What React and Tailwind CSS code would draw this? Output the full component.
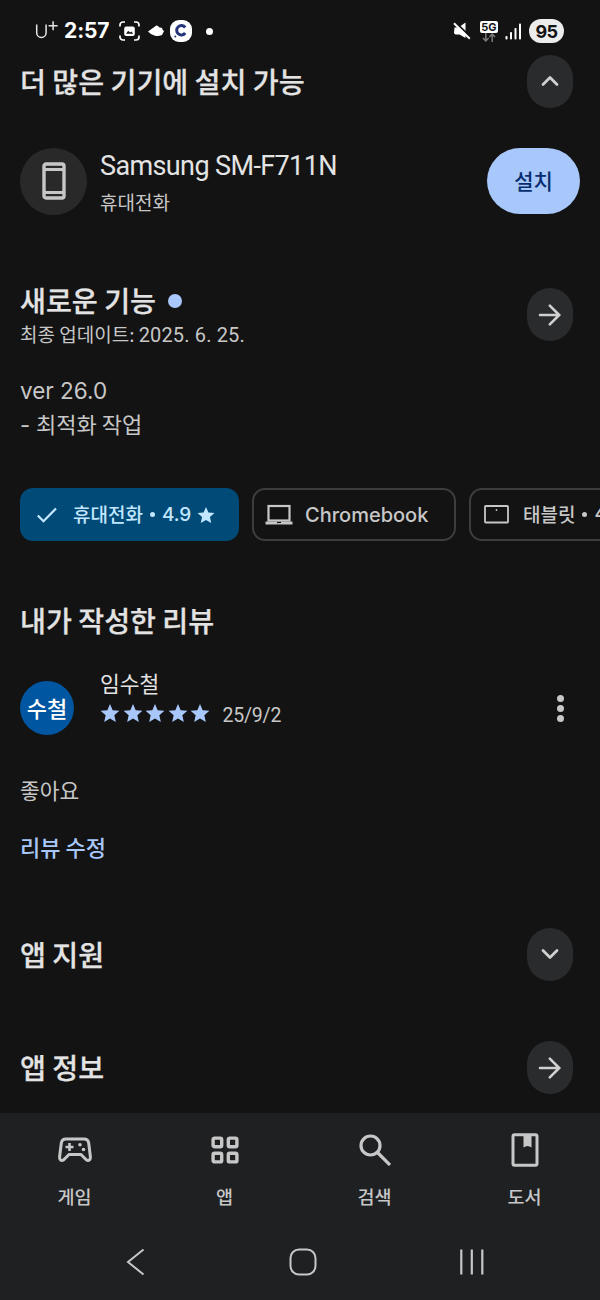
import { ChevronUp, ChevronDown } from 'lucide-react'

const STAR = 'M12 1.2l3.2 7.500 8.100.700-6.100 5.400 1.800 7.900L12 18.500l-7 4.200 1.800-7.900L.7 9.400l8.100-.7z'

function Star({ className }) {
  return (
    <svg viewBox="0 0 24 24" className={className} fill="currentColor">
      <path d={STAR} />
    </svg>
  )
}

function ArrowIcon() {
  return (
    <svg width="24" height="24" viewBox="0 0 24 24" fill="none" stroke="currentColor" strokeWidth="2.6" strokeLinecap="round">
      <path d="M2 12h19M11.800 2.700l9.400 9.300-9.400 9.300" />
    </svg>
  )
}

function RoundButton({ children }) {
  return (
    <button className="flex h-[53px] w-[46px] shrink-0 items-center justify-center rounded-full bg-[#2a2b2d] text-[#d0d0d0]">
      {children}
    </button>
  )
}

function Heading({ children }) {
  return (
    <h2 className="-mt-[2px] text-[28.200px] leading-9 font-medium whitespace-nowrap text-[#e3e3e3] [-webkit-text-stroke:0.25px]">
      {children}
    </h2>
  )
}

function StatusBar() {
  return (
    <div className="flex h-[55px] items-center pt-[7px] pr-[36px] pl-[35px] font-['Inter',sans-serif] text-white">
      <svg width="24" height="22" viewBox="0 0 24 22" fill="none" stroke="#e8e8e8" strokeWidth="1.5">
        <path d="M1.700 4.500v8.200a4.700 4.700 0 0 0 9.400 0V4.500M13.600 5.800h9M18.100 1.300v9" />
      </svg>
      <span className="ml-[5px] w-[46px] text-[21px] leading-6 font-bold tracking-[-0.100px] whitespace-nowrap">2:57</span>
      <svg className="ml-[9px]" width="21" height="20" viewBox="0 0 21 20" fill="none" stroke="white" strokeWidth="1.7">
        <path d="M1 5.500V4a3 3 0 0 1 3-3h2M15 1h2a3 3 0 0 1 3 3v1.500M20 14.500V16a3 3 0 0 1-3 3h-2M6 19H4a3 3 0 0 1-3-3v-1.500" />
        <rect x="5.200" y="5.500" width="10.600" height="9.500" rx="2" fill="white" stroke="none" />
        <path d="M7 12.800l2.200-3 1.800 1.800 1.500-1.200 1.700 2.400z" fill="#131313" stroke="none" />
      </svg>
      <svg className="ml-[7px]" width="18" height="14" viewBox="0 0 18 14" fill="white">
        <path d="M1 7.500L8 2.500q1.500-1.800 3-.5l1.500 1.500 2 .2q1 .4.800 1.600l1.700 2-2 3.700q-3.500 1.500-7 .800-4-.7-7-4.300z" />
      </svg>
      <span className="ml-[5px] flex h-[22px] w-[22px] items-center justify-center rounded-[9px] bg-white">
        <svg width="18" height="18" viewBox="0 0 18 18" fill="none" stroke="#26357b" strokeWidth="3">
          <path d="M13.200 5.500A4.700 4.700 0 1 0 13.200 11" />
          <circle cx="3.300" cy="14.500" r="1" fill="#26357b" stroke="none" />
        </svg>
      </span>
      <span className="ml-[14px] h-[7px] w-[7px] rounded-full bg-white" />

      <svg className="ml-auto" width="18" height="18" viewBox="0 0 18 18" fill="white">
        <path d="M1.500 5.500h4l7-5V16L6.500 12.500H3a2 2 0 0 1-2-2z" />
        <path d="M2 0l16 15.500" stroke="#131313" strokeWidth="2" />
        <path d="M1 1.200l15.800 15.500" stroke="white" strokeWidth="1.900" />
      </svg>
      <span className="ml-[9px] flex w-[18px] flex-col items-center">
        <span className="h-[12px] w-[18px] rounded-[2px] bg-white text-center text-[11px] leading-[12px] font-bold text-[#131313]">5G</span>
        <svg width="14" height="9" viewBox="0 0 14 9" fill="none" stroke="#77797a" strokeWidth="1.500">
          <path d="M3.800 0v8M1 5l2.800 3 2.800-3M10.200 9V1M7.400 4l2.800-3L13 4" />
        </svg>
      </span>
      <svg className="ml-[7px]" width="17" height="17" viewBox="0 0 17 17" fill="white">
        <rect x="0.500" y="13" width="2" height="3.500" rx=".8" />
        <rect x="5" y="9" width="2" height="7.500" rx=".8" />
        <rect x="9.500" y="5" width="2" height="11.500" rx=".8" />
        <rect x="14" y="0.500" width="2" height="16" rx=".8" />
      </svg>
      <span className="ml-[7px] flex h-[24px] w-[35px] items-center justify-center rounded-full bg-[#ececec] text-[18px] font-bold tracking-[-0.500px] text-[#131313]">
        95
      </span>
    </div>
  )
}

function PhoneIcon() {
  return (
    <svg width="24" height="38" viewBox="0 0 24 38" fill="none" stroke="#c7c7c7" strokeWidth="3.400">
      <rect x="2" y="2" width="20" height="34" rx="2" />
      <path d="M2 7.500h20M2 30.500h20" strokeWidth="2.800" />
    </svg>
  )
}

function Chips() {
  return (
    <div className="mt-[46px] flex h-[53px] gap-[13px] overflow-hidden pl-5 text-[19px] font-medium whitespace-nowrap">
      <div className="flex w-[219px] shrink-0 items-center rounded-[13px] bg-[#004a77] pl-[17px] text-[#c2e7ff]">
        <svg width="20" height="16" viewBox="0 0 20 16" fill="none" stroke="currentColor" strokeWidth="2.300">
          <path d="M.8 8.500l5.700 5.700L19 1.500" />
        </svg>
        <span className="ml-[16px]">휴대전화</span>
        <span className="ml-[7px] h-[5px] w-[5px] rounded-full bg-current" />
        <span className="ml-[7px] pt-px font-['Inter',sans-serif]">4.9</span>
        <Star className="ml-[6px] h-[18px] w-[18px]" />
      </div>
      <div className="flex w-[204px] shrink-0 items-center rounded-[13px] border-2 border-[#3c3e3d] pl-[11px] text-[#c7c7c7]">
        <svg width="28" height="22" viewBox="0 0 28 22" fill="none" stroke="currentColor" strokeWidth="2.200">
          <rect x="3.500" y="2" width="21" height="14.500" />
          <path d="M.5 19h27" strokeWidth="3" />
          <path d="M12 18.500h4" stroke="#131313" strokeWidth="1.200" />
        </svg>
        <span className="ml-[12px] pt-px font-['Inter',sans-serif] text-[20px]">Chromebook</span>
      </div>
      <div className="flex w-[204px] shrink-0 items-center rounded-[13px] border-2 border-[#3c3e3d] pl-[13px] text-[#c7c7c7]">
        <svg width="25" height="19" viewBox="0 0 25 19" fill="none" stroke="currentColor" strokeWidth="1.800">
          <rect x="1" y="1" width="23" height="16.500" rx=".8" />
          <circle cx="12.500" cy="5" r=".9" fill="currentColor" stroke="none" />
        </svg>
        <span className="ml-[14px]">태블릿</span>
        <span className="ml-[7px] h-[5px] w-[5px] rounded-full bg-current" />
        <span className="ml-[7px] font-['Inter',sans-serif]">4.8</span>
      </div>
    </div>
  )
}

const tabs = [
  {
    label: '게임',
    icon: (
      <svg width="34" height="26" viewBox="0 0 34 26" fill="none" stroke="currentColor" strokeWidth="3" strokeLinejoin="round">
        <path d="M8 2h18q4 0 4.700 4L32.300 19q.4 4.500-2.300 4.500-1.300 0-2.500-1.500L23 17.500H11L6.500 22Q5.300 23.500 4 23.500 1.300 23.500 1.700 19L3.300 6Q4 2 8 2z" />
        <path d="M11.500 6v8M7.500 10h8" strokeWidth="2.600" />
        <g fill="currentColor" stroke="none">
          <circle cx="22" cy="7.800" r="1.800" />
          <circle cx="25.500" cy="12.500" r="1.800" />
        </g>
      </svg>
    ),
  },
  {
    label: '앱',
    icon: (
      <svg width="28" height="28" viewBox="0 0 28 28" fill="none" stroke="currentColor" strokeWidth="3.400">
        <rect x="2.100" y="2.100" width="8.600" height="8.600" rx="1.500" />
        <rect x="17.300" y="2.100" width="8.600" height="8.600" rx="1.500" />
        <rect x="2.100" y="17.300" width="8.600" height="8.600" rx="1.500" />
        <rect x="17.300" y="17.300" width="8.600" height="8.600" rx="1.500" />
      </svg>
    ),
  },
  {
    label: '검색',
    icon: (
      <svg width="32" height="32" viewBox="0 0 32 32" fill="none" stroke="currentColor" strokeWidth="3.200">
        <circle cx="11.500" cy="11.500" r="9.500" />
        <path d="M18.500 18.500L31 31" />
      </svg>
    ),
  },
  {
    label: '도서',
    icon: (
      <svg width="28" height="34" viewBox="0 0 28 34" fill="none" stroke="currentColor" strokeWidth="3">
        <rect x="2" y="1.700" width="24" height="30.600" rx="1.500" />
        <path d="M12.500 2h8v12.500q-4-3-8 0z" fill="currentColor" stroke="none" />
      </svg>
    ),
  },
]

function BottomNav() {
  return (
    <div className="flex h-[187px] shrink-0 flex-col bg-[#1f2022] text-[#c7c7c7]">
      <div className="grid grid-cols-4 pt-[19px]">
        {tabs.map((tab) => (
          <div key={tab.label} className="flex flex-col items-center">
            <div className="flex h-9 items-center">{tab.icon}</div>
            <span className="mt-4 mr-px text-[18.500px] leading-6 font-medium">{tab.label}</span>
          </div>
        ))}
      </div>
      {/* system navigation */}
      <div className="mt-[38px] flex h-[32px] items-center pl-[126px]">
        <svg width="20" height="28" viewBox="0 0 20 28" fill="none" stroke="currentColor" strokeWidth="2">
          <path d="M17.500 1.500L2 14l15.500 12.500" />
        </svg>
        <svg className="ml-[143px]" width="28" height="28" viewBox="0 0 28 28" fill="none" stroke="currentColor" strokeWidth="2">
          <rect x="1.500" y="1.500" width="25" height="25" rx="8.500" />
        </svg>
        <svg className="ml-[142px]" width="26" height="28" viewBox="0 0 26 28" fill="none" stroke="currentColor" strokeWidth="2.200">
          <path d="M2.300 1.500v25M12.800 1.500v25M23.300 1.500v25" />
        </svg>
      </div>
    </div>
  )
}

export default function App() {
  return (
    <div className="flex h-[1300px] w-[600px] flex-col overflow-hidden bg-[#131313] font-['Noto_Sans_CJK_KR',sans-serif] text-[#c7c7c7]">
      <StatusBar />

      <section className="flex h-[53px] items-center justify-between pr-[27px] pl-5">
        <Heading>더 많은 기기에 설치 가능</Heading>
        <RoundButton>
          <ChevronUp className="mb-px h-7 w-7" strokeWidth={2.4} />
        </RoundButton>
      </section>

      <section className="mt-[40px] flex h-[66px] items-center px-5">
        <div className="flex h-[67px] w-[67px] items-center justify-center rounded-full bg-[#292929]">
          <PhoneIcon />
        </div>
        <div className="ml-[13px] pt-[2px]">
          <p className="font-['Roboto',sans-serif] text-[27px] leading-9 tracking-[-0.620px] whitespace-nowrap text-[#e3e3e3]">
            Samsung SM-F711N
          </p>
          <p className="mt-1 text-[19px] leading-7">휴대전화</p>
        </div>
        <button className="ml-auto h-[66px] w-[93px] rounded-full bg-[#a8c7fa] pb-px text-[21px] font-medium text-[#062e6f]">
          설치
        </button>
      </section>

      <section className="mt-[70px] flex justify-between pr-[27px] pl-5">
        <div>
          <div className="flex items-center">
            <Heading>새로운 기능</Heading>
            <span className="ml-[12px] h-[14px] w-[14px] rounded-full bg-[#a8c7fa]" />
          </div>
          <p className="mt-[2px] text-[19px] leading-7 whitespace-nowrap">
            최종 업데이트:{' '}
            <span className="font-['Roboto',sans-serif] text-[20px] tracking-[0.150px]">2025. 6. 25.</span>
          </p>
        </div>
        <div className="pt-[4px]">
          <RoundButton>
            <ArrowIcon />
          </RoundButton>
        </div>
      </section>
      <div className="mt-[25px] pl-5 text-[22px] leading-[34px]">
        <p className="font-['Inter',sans-serif] text-[22.500px]">ver 26.0</p>
        <p className="-mt-[2px]">
          <span className="inline-block w-[16px] font-['Inter',sans-serif]">-</span>최적화 작업
        </p>
      </div>

      <Chips />

      <section className="mt-[63px] pl-5">
        <Heading>내가 작성한 리뷰</Heading>
        <div className="mt-[38px] flex h-[70px]">
          <div className="mt-[5px] flex h-[54px] w-[54px] items-center justify-center rounded-full bg-[#0056a0] pb-px text-[22px] font-medium text-white">
            수철
          </div>
          <div className="-mt-[7px] ml-[26px]">
            <p className="text-[21.500px] leading-7 text-[#e3e3e3]">임수철</p>
            <div className="mt-[3px] flex items-center text-[#a8c7fa]">
              {[1, 2, 3, 4, 5].map((n) => (
                <Star key={n} className="mr-[2.500px] h-[20px] w-[20px]" />
              ))}
              <span className="mt-[6px] ml-[10px] font-['Roboto',sans-serif] text-[19.500px] leading-5 tracking-[-0.200px] text-[#c7c7c7]">
                25/9/2
              </span>
            </div>
          </div>
          <div className="mt-[19px] mr-[36px] ml-auto flex flex-col gap-[3px]">
            <span className="h-[7px] w-[7px] rounded-full bg-current" />
            <span className="h-[7px] w-[7px] rounded-full bg-current" />
            <span className="h-[7px] w-[7px] rounded-full bg-current" />
          </div>
        </div>
        <p className="mt-[30px] text-[21.500px] leading-7">좋아요</p>
        <p className="mt-[28px] text-[22px] leading-7 font-medium text-[#a8c7fa]">리뷰 수정</p>
      </section>

      <section className="mt-[68px] flex h-[53px] items-center justify-between pr-[27px] pl-5">
        <Heading>앱 지원</Heading>
        <RoundButton>
          <ChevronDown className="mb-px h-7 w-7" strokeWidth={2.4} />
        </RoundButton>
      </section>
      <section className="mt-[60px] mb-auto flex h-[53px] items-center justify-between pr-[27px] pl-5">
        <Heading>앱 정보</Heading>
        <RoundButton>
          <ArrowIcon />
        </RoundButton>
      </section>

      <BottomNav />
    </div>
  )
}
